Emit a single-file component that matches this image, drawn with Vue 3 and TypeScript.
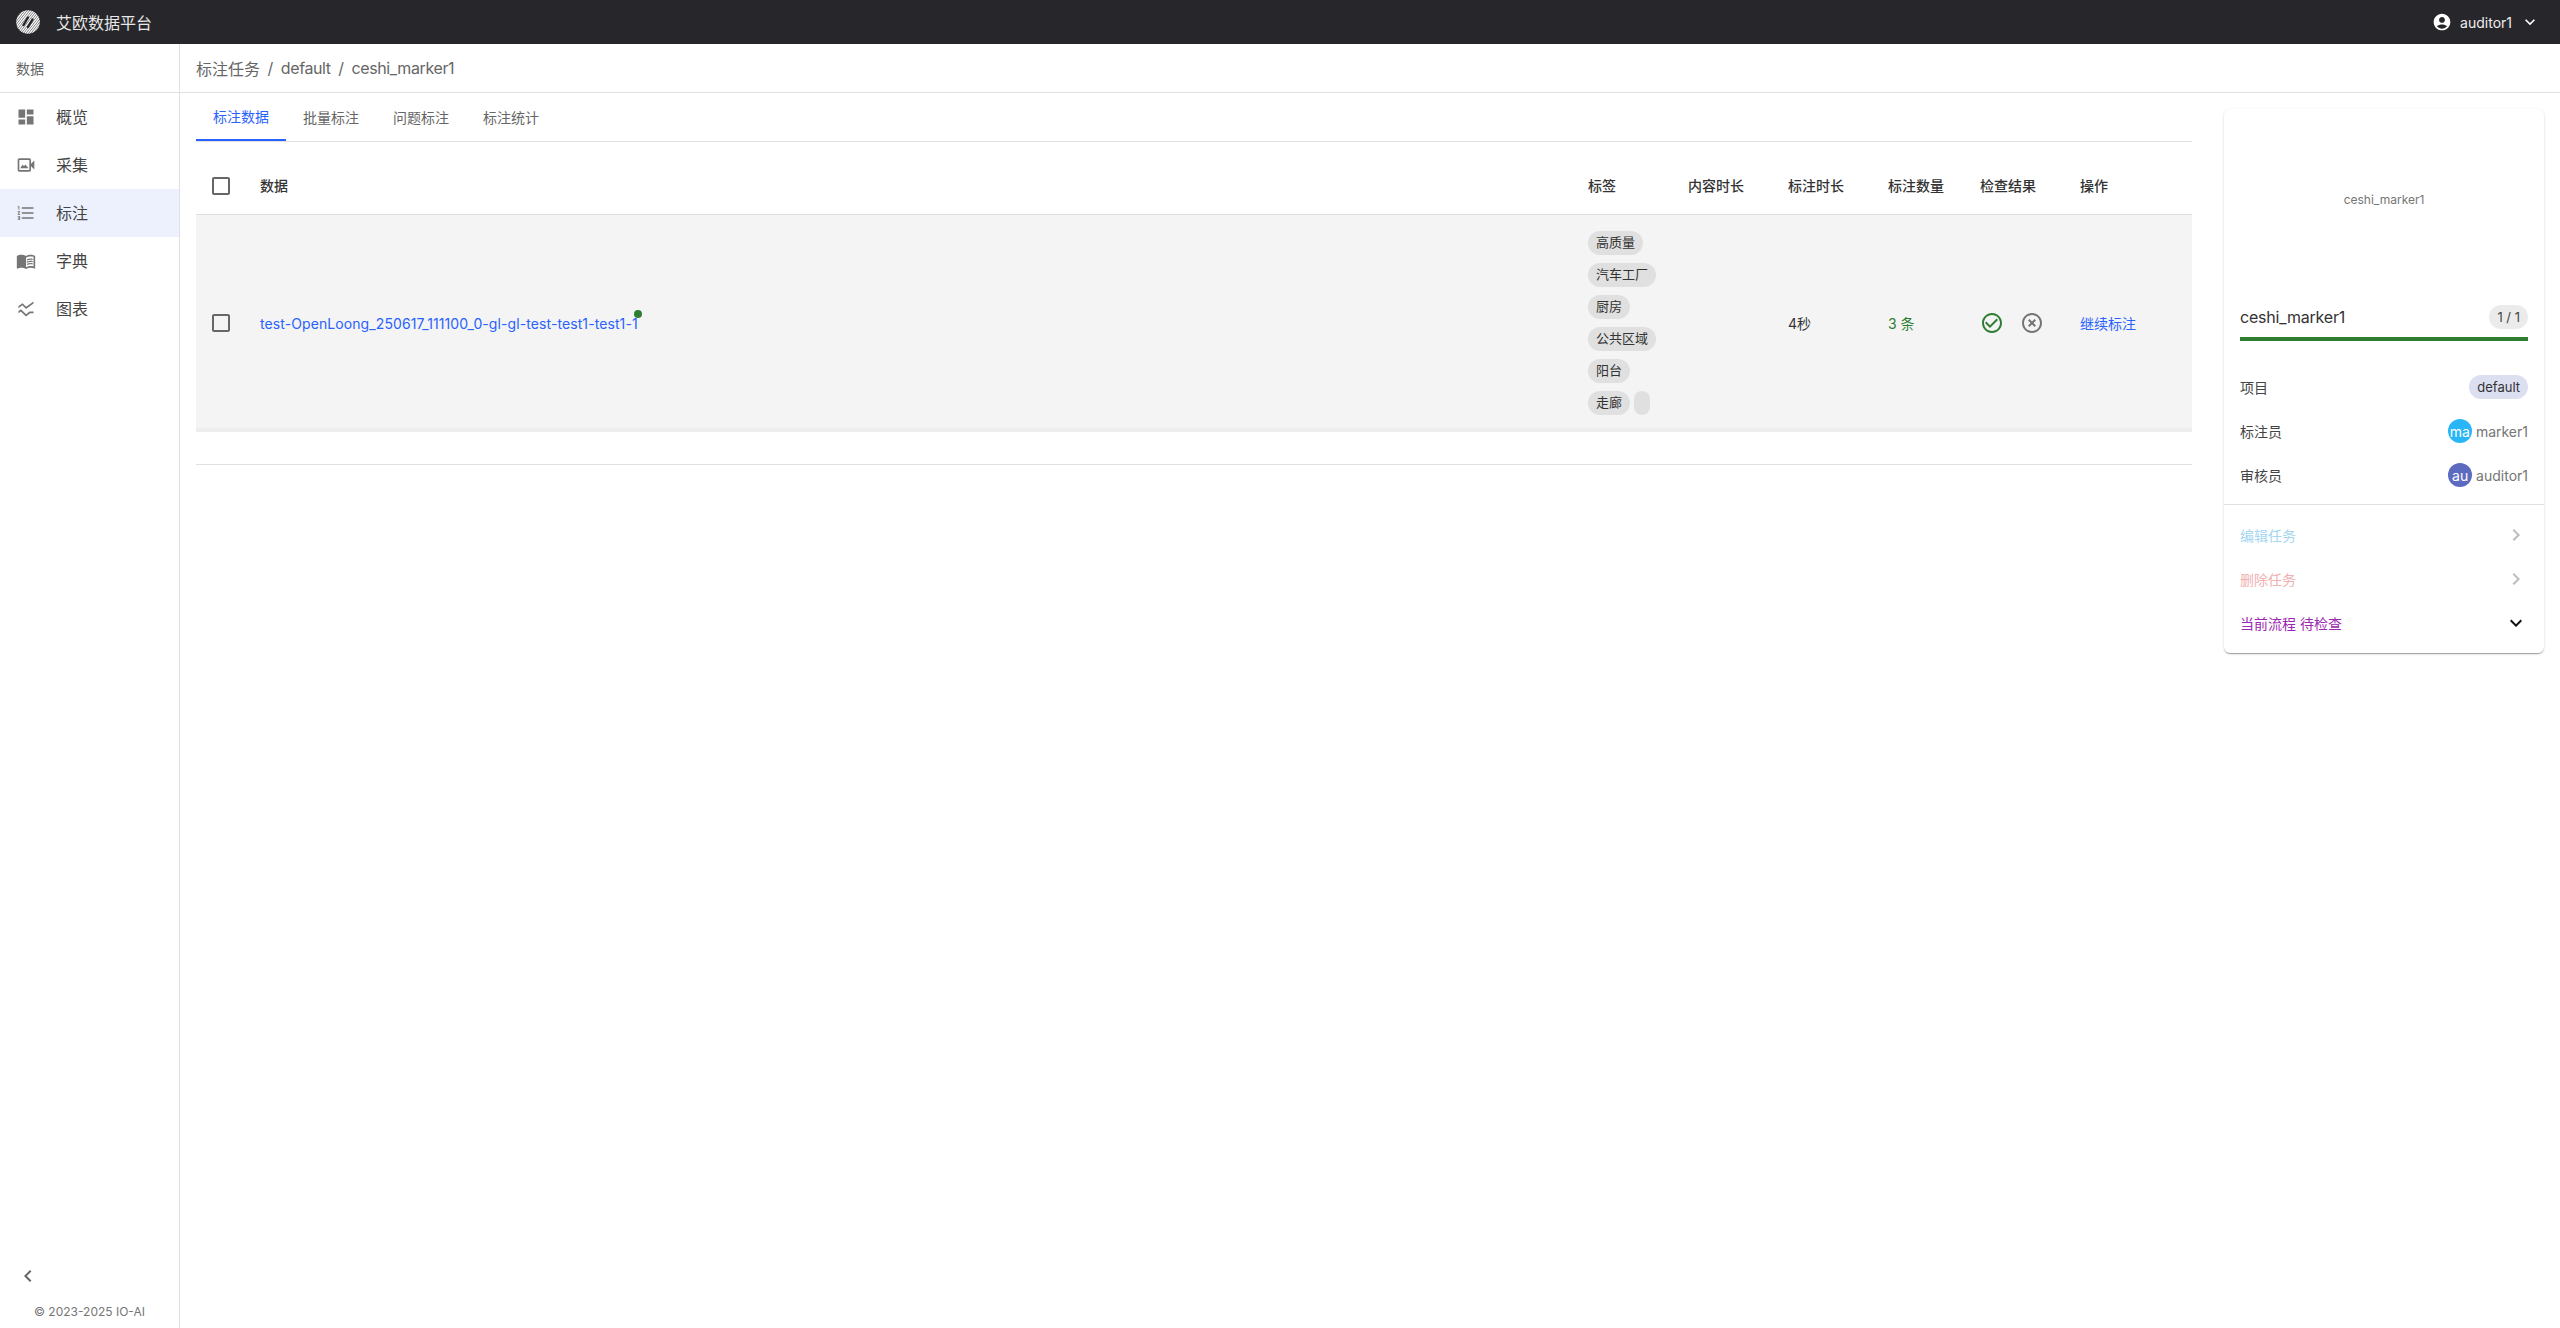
<script setup lang="ts">
interface NavItem { label: string; paths: string[]; active?: boolean }
const nav: NavItem[] = [
  { label: '概览', paths: ['M3 13h8V3H3v10zm0 8h8v-6H3v6zm10 0h8V11h-8v10zm0-18v6h8V3h-8z'] },
  { label: '采集', paths: ['M18 10.48V6c0-1.1-.9-2-2-2H4c-1.1 0-2 .9-2 2v12c0 1.1.9 2 2 2h12c1.1 0 2-.9 2-2v-4.48l4 3.98v-11l-4 3.98zM16 18H4V6h12v12z', 'M11.25 11.25 9.5 13.5 8 11.5 5 16h10z'] },
  { label: '标注', active: true, paths: ['M2 17h2v.5H3v1h1v.5H2v1h3v-4H2v1zm1-9h1V4H2v1h1v3zm-1 3h1.8L2 13.1v.9h3v-1H3.2L5 10.9V10H2v1zm5-6v2h14V5H7zm0 14h14v-2H7v2zm0-6h14v-2H7v2z'] },
  { label: '字典', paths: ['M21 5c-1.11-.35-2.33-.5-3.5-.5-1.95 0-4.05.4-5.5 1.5-1.45-1.1-3.55-1.5-5.5-1.5S2.45 4.9 1 6v14.65c0 .25.25.5.5.5.1 0 .15-.05.25-.05C3.1 20.45 5.05 20 6.5 20c1.95 0 4.05.4 5.5 1.5 1.35-.85 3.8-1.5 5.5-1.5 1.65 0 3.35.3 4.75 1.05.1.05.15.05.25.05.25 0 .5-.25.5-.5V6c-.6-.45-1.25-.75-2-1zm0 13.5c-1.1-.35-2.3-.5-3.5-.5-1.7 0-4.15.65-5.5 1.5V8c1.35-.85 3.8-1.5 5.5-1.5 1.2 0 2.4.15 3.5.5v11.5z', 'M17.5 10.5c.88 0 1.73.09 2.5.26V9.24c-.79-.15-1.64-.24-2.5-.24-1.7 0-3.24.29-4.5.83v1.66c1.13-.64 2.7-.99 4.5-.99zM13 12.49v1.66c1.13-.64 2.7-.99 4.5-.99.88 0 1.73.09 2.5.26V11.9c-.79-.15-1.64-.24-2.5-.24-1.7 0-3.24.3-4.5.83zM17.5 14.33c-1.7 0-3.24.29-4.5.83v1.66c1.13-.64 2.7-.99 4.5-.99.88 0 1.73.09 2.5.26v-1.52c-.79-.16-1.64-.24-2.5-.24z'] },
  { label: '图表', paths: ['M21 5.47 12 12 7.62 7.62 3 11V8.52L7.83 5l4.38 4.38L21 3v2.47zM21 15h-4.7l-4.17 3.34L6 12.41l-3 2.13v2.45l2.8-2 6.2 6 5-4h4v-2z'] },
]
const tabs = ['标注数据', '批量标注', '问题标注', '标注统计']
const headers = ['数据', '标签', '内容时长', '标注时长', '标注数量', '检查结果', '操作']
const chips = ['高质量', '汽车工厂', '厨房', '公共区域', '阳台']
const hatch = Array.from({ length: 19 }, (_, i) => i * 2.4 - 22)
const boxPath = 'M19 5v14H5V5h14m0-2H5c-1.1 0-2 .9-2 2v14c0 1.1.9 2 2 2h14c1.1 0 2-.9 2-2V5c0-1.1-.9-2-2-2z'
const down = 'M7.41 8.59 12 13.17l4.59-4.58L18 10l-6 6-6-6 1.41-1.41z'
const right = 'M10 6 8.59 7.41 13.17 12l-4.58 4.59L10 18l6-6z'
</script>

<template>
  <div class="app">
    <header class="topbar">
      <div class="brand">
        <svg class="logo" viewBox="0 0 24 24">
          <defs><clipPath id="disc"><circle cx="12" cy="12" r="11.8" /></clipPath></defs>
          <g clip-path="url(#disc)">
            <circle cx="12" cy="12" r="12" fill="#55555a" />
            <line v-for="h in hatch" :key="h" :x1="h" y1="26" :x2="h + 22" y2="-2" stroke="#fff" stroke-width="1.3" />
            <path d="M7.5 15 12 7.5M12 17l4.5-7.5" fill="none" stroke="#27272b" stroke-width="2.4" stroke-linecap="round" />
          </g>
        </svg>
        <span>艾欧数据平台</span>
      </div>
      <div class="user">
        <svg class="user-icon" viewBox="0 0 24 24"><path fill="#fff" d="M12 2C6.48 2 2 6.48 2 12s4.48 10 10 10 10-4.48 10-10S17.52 2 12 2zm0 4c1.93 0 3.5 1.57 3.5 3.5S13.93 13 12 13s-3.5-1.57-3.5-3.5S10.07 6 12 6zm0 14c-2.03 0-4.43-.82-6.14-2.88C7.55 15.8 9.68 15 12 15s4.45.8 6.14 2.12C16.43 19.18 14.03 20 12 20z" /></svg>
        <span>auditor1</span>
        <svg class="user-arrow" viewBox="0 0 24 24"><path fill="#fff" :d="down" /></svg>
      </div>
    </header>

    <div class="body">
      <aside class="sidebar">
        <div class="side-title">数据</div>
        <nav class="nav">
          <div v-for="item in nav" :key="item.label" class="nav-item" :class="{ active: item.active }">
            <svg class="nav-icon" viewBox="0 0 24 24"><path v-for="p in item.paths" :key="p" :d="p" /></svg>
            <span class="nav-label">{{ item.label }}</span>
          </div>
        </nav>
        <div class="side-foot">
          <svg class="collapse" viewBox="0 0 24 24"><path d="M15.41 7.41 14 6l-6 6 6 6 1.41-1.41L10.83 12z" /></svg>
          <div class="copyright">© 2023-2025 IO-AI</div>
        </div>
      </aside>

      <main class="main">
        <div class="crumbs">
          <span>标注任务</span><i>/</i><span class="latin">default</span><i>/</i><span class="latin">ceshi_marker1</span>
        </div>
        <div class="content">
          <section class="left">
            <div class="tabs">
              <div v-for="(t, i) in tabs" :key="t" class="tab" :class="{ on: i === 0 }">{{ t }}</div>
            </div>
            <div class="table">
              <div class="row head">
                <div class="cell check"><svg class="box" viewBox="0 0 24 24"><path :d="boxPath" /></svg></div>
                <div v-for="h in headers" :key="h" class="cell head-cell">{{ h }}</div>
              </div>
              <div class="row data">
                <div class="cell check"><svg class="box" viewBox="0 0 24 24"><path :d="boxPath" /></svg></div>
                <div class="cell name-cell"><a class="link name">test-OpenLoong_250617_111100_0-gl-gl-test-test1-test1-1<b class="dot"></b></a></div>
                <div class="cell chips">
                  <span v-for="c in chips" :key="c" class="chip">{{ c }}</span>
                  <div class="chip-line"><span class="chip">走廊</span><span class="chip blank"></span></div>
                </div>
                <div class="cell"></div>
                <div class="cell">4秒</div>
                <div class="cell ok">3 条</div>
                <div class="cell results">
                  <svg viewBox="0 0 24 24"><path fill="#2e7d32" d="M16.59 7.58 10 14.17l-3.59-3.58L5 12l5 5 8-8zM12 2C6.48 2 2 6.48 2 12s4.48 10 10 10 10-4.48 10-10S17.52 2 12 2zm0 18c-4.42 0-8-3.58-8-8s3.58-8 8-8 8 3.58 8 8-3.58 8-8 8z" /></svg>
                  <svg viewBox="0 0 24 24"><path fill="#757575" d="M14.59 8 12 10.59 9.41 8 8 9.41 10.59 12 8 14.59 9.41 16 12 13.41 14.59 16 16 14.59 13.41 12 16 9.41 14.59 8zM12 2C6.47 2 2 6.47 2 12s4.47 10 10 10 10-4.47 10-10S17.53 2 12 2zm0 18c-4.41 0-8-3.59-8-8s3.59-8 8-8 8 3.59 8 8-3.59 8-8 8z" /></svg>
                </div>
                <div class="cell"><a class="link">继续标注</a></div>
              </div>
              <div class="pager"></div>
            </div>
          </section>

          <aside class="card">
            <div class="media">ceshi_marker1</div>
            <div class="info">
              <div class="title-row"><span class="title">ceshi_marker1</span><span class="count">1 / 1</span></div>
              <div class="progress"></div>
              <div class="meta first"><span class="meta-label">项目</span><span class="project">default</span></div>
              <div class="meta"><span class="meta-label">标注员</span><span class="person"><b class="avatar sky">ma</b>marker1</span></div>
              <div class="meta"><span class="meta-label">审核员</span><span class="person"><b class="avatar indigo">au</b>auditor1</span></div>
            </div>
            <div class="actions">
              <div class="action edit"><span>编辑任务</span><svg viewBox="0 0 24 24"><path fill="#bdbdbd" :d="right" /></svg></div>
              <div class="action del"><span>删除任务</span><svg viewBox="0 0 24 24"><path fill="#bdbdbd" :d="right" /></svg></div>
              <div class="action flow"><span>当前流程 待检查</span><svg viewBox="0 0 24 24"><path fill="#111" :d="down" /></svg></div>
            </div>
          </aside>
        </div>
      </main>
    </div>
  </div>
</template>

<style scoped>
.app {
  height: 100vh;
  display: flex;
  flex-direction: column;
  overflow: hidden;
  background: #fff;
  font-family: Inter, "Noto Sans CJK SC", sans-serif;
  font-size: 14px;
  color: #333;
}
.topbar {
  height: 44px;
  flex: none;
  background: #27272b;
  color: #fff;
  display: flex;
  align-items: center;
  justify-content: space-between;
  padding: 0 20px 0 16px;
}
.brand { display: flex; align-items: center; gap: 16px; font-size: 16px; color: #e8e8e8; }
.logo { width: 24px; height: 24px; display: block; }
.user { display: flex; align-items: center; font-size: 14px; color: #eee; }
.user-icon { width: 20px; height: 20px; margin-right: 8px; }
.user-arrow { width: 20px; height: 20px; margin-left: 8px; }
.body { flex: 1; display: flex; min-height: 0; }
.sidebar {
  width: 180px;
  flex: none;
  box-sizing: border-box;
  border-right: 1px solid #e0e0e0;
  display: flex;
  flex-direction: column;
}
.side-title {
  height: 49px;
  box-sizing: border-box;
  border-bottom: 1px solid #e0e0e0;
  padding: 0 0 1px 16px;
  display: flex;
  align-items: center;
  color: #666;
}
.nav { flex: 1; }
.nav-item {
  height: 48px;
  display: flex;
  align-items: center;
  padding-left: 16px;
  gap: 20px;
  font-size: 16px;
  color: #444;
}
.nav-label { padding-bottom: 2px; }
.nav-item.active { background: #edf1fd; }
.nav-icon { width: 20px; height: 20px; fill: #757575; }
.side-foot { padding-bottom: 8px; }
.collapse { display: block; width: 24px; height: 24px; margin-left: 16px; fill: #666; margin-bottom: 16px; }
.copyright { text-align: center; font-size: 12px; line-height: 16px; color: #757575; }
.main { flex: 1; min-width: 0; display: flex; flex-direction: column; }
.crumbs {
  height: 49px;
  flex: none;
  box-sizing: border-box;
  border-bottom: 1px solid #e0e0e0;
  padding-left: 16px;
  display: flex;
  align-items: center;
  font-size: 16px;
  color: #666;
}
.crumbs i { font-style: normal; margin: 0 7.5px; }
.latin { letter-spacing: -0.38px; }
.content { flex: 1; display: flex; padding: 0 16px; gap: 32px; align-items: flex-start; }
.left { flex: 1; min-width: 0; }
.tabs { display: flex; height: 49px; box-sizing: border-box; border-bottom: 1px solid #e0e0e0; }
.tab {
  width: 90px;
  height: 48px;
  box-sizing: border-box;
  display: flex;
  align-items: center;
  justify-content: center;
  padding-bottom: 1px;
  color: #666;
}
.tab.on { color: #2962ff; border-bottom: 2px solid #2962ff; padding-bottom: 0; }
.table { margin-top: 16px; }
.row {
  display: grid;
  grid-template-columns: 48px 1328px 100px 100px 100px 92px 100px 1fr;
  align-items: center;
}
.head {
  height: 57px;
  box-sizing: border-box;
  border-bottom: 1px solid #e0e0e0;
  font-weight: 500;
  color: #333;
}
.head-cell { padding-bottom: 2px; }
.data { height: 217px; box-sizing: border-box; padding-bottom: 1px; background: #f4f4f4; box-shadow: inset 0 -4px 0 #eee; }
.cell { padding-left: 16px; min-width: 0; }
.cell.check { padding-left: 13px; height: 24px; }
.name-cell { padding-top: 1px; }
.box { display: block; width: 24px; height: 24px; fill: #666; }
.link { color: #2962ff; }
.name { position: relative; display: inline-block; letter-spacing: 0.09px; }
.dot {
  position: absolute;
  right: -4px;
  top: -5px;
  width: 8px;
  height: 8px;
  border-radius: 50%;
  background: #2e7d32;
}
.chips { display: flex; flex-direction: column; align-items: flex-start; gap: 8px; }
.chip-line { display: flex; gap: 4px; }
.chip {
  height: 24px;
  box-sizing: border-box;
  padding: 0 8px;
  border-radius: 12px;
  background: #e0e0e0;
  font-size: 13px;
  line-height: 23px;
  color: #333;
}
.chip.blank { width: 16px; padding: 0; }
.ok { color: #2e7d32; }
.results { display: flex; gap: 16px; }
.results svg { width: 24px; height: 24px; flex: none; }
.pager { height: 33px; box-sizing: border-box; border-bottom: 1px solid #e0e0e0; }
.card {
  width: 320px;
  flex: none;
  margin-top: 16px;
  border-radius: 6px;
  background: #fff;
  box-shadow: 0 2px 1px -1px rgba(0,0,0,.2), 0 1px 1px 0 rgba(0,0,0,.14), 0 1px 3px 0 rgba(0,0,0,.12);
}
.media {
  height: 180px;
  display: flex;
  align-items: center;
  justify-content: center;
  font-size: 12px;
  color: #757575;
}
.info { padding: 16px 16px 17px; border-bottom: 1px solid #e0e0e0; }
.title-row { display: flex; justify-content: space-between; align-items: center; height: 24px; }
.title { font-size: 16px; color: #333; letter-spacing: -0.2px; }
.count {
  height: 24px;
  padding: 0 8px;
  border-radius: 12px;
  background: #ebebeb;
  font-size: 13px;
  line-height: 24px;
  color: #444;
}
.progress { height: 4px; margin-top: 8px; background: #2e7d32; }
.meta { display: flex; justify-content: space-between; align-items: center; height: 24px; margin-top: 20px; color: #444; }
.meta.first { margin-top: 34px; }
.meta-label { padding-bottom: 1px; }
.project {
  height: 24px;
  padding: 0 8px;
  border-radius: 12px;
  background: #dcdff0;
  font-size: 13px;
  line-height: 24px;
  color: #333;
}
.person { display: flex; align-items: center; gap: 4px; color: #757575; }
.avatar {
  width: 24px;
  height: 24px;
  border-radius: 50%;
  display: flex;
  align-items: center;
  justify-content: center;
  font-weight: 400;
  color: #fff;
}
.sky { background: #29b6f6; }
.indigo { background: #5c6bc0; }
.actions { padding: 8px 0; }
.action { height: 44px; padding: 0 16px; display: flex; align-items: center; justify-content: space-between; }
.action svg { width: 24px; height: 24px; }
.edit { color: #a5d6f2; }
.del { color: #f0b0b0; }
.flow { color: #9c27b0; }
</style>
